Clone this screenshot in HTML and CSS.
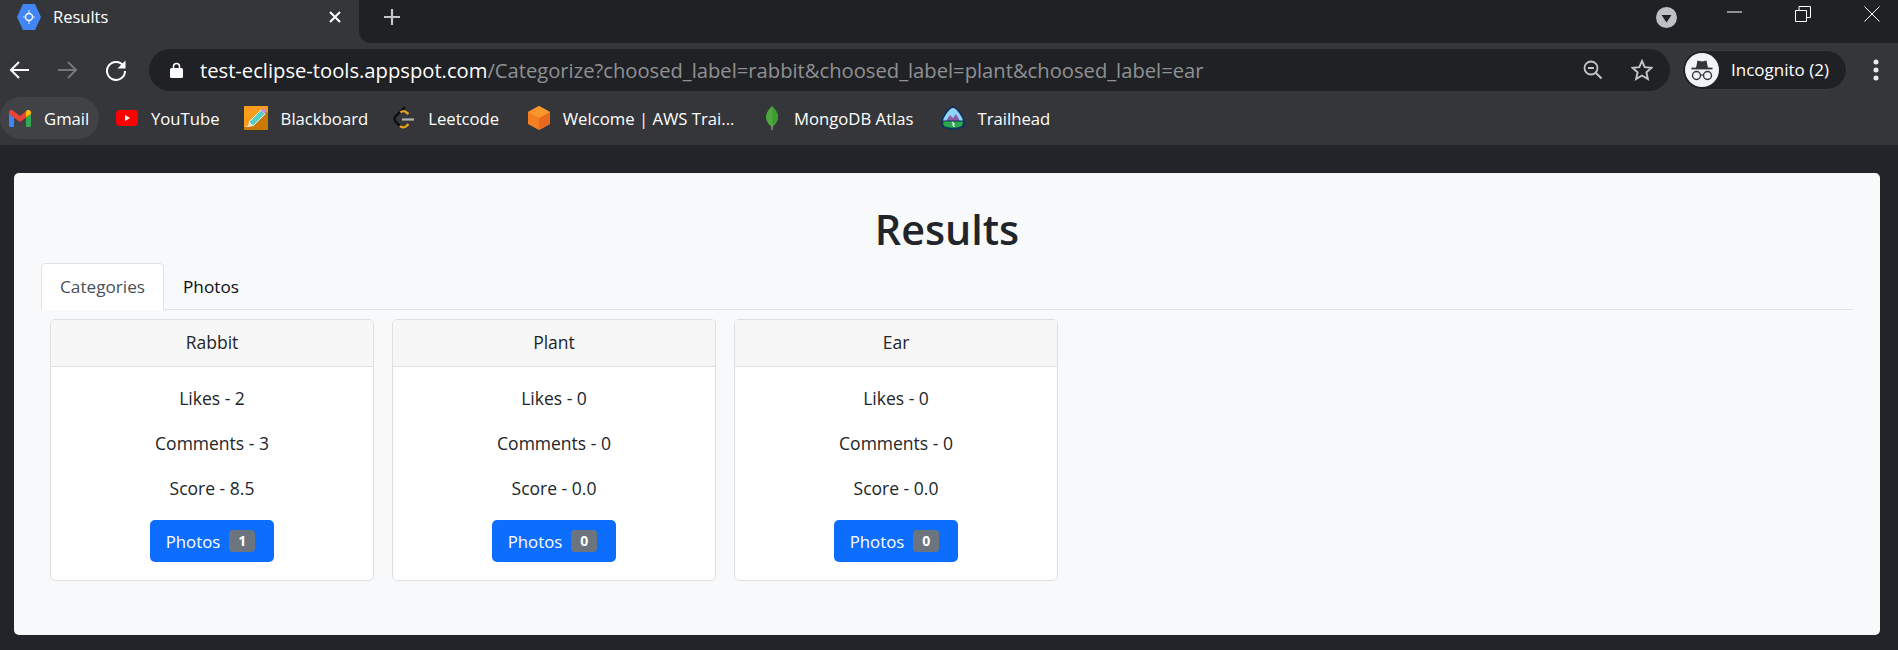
FILE: index.html
```html
<!DOCTYPE html>
<html lang="en">
<head>
  <meta charset="UTF-8">
  <title>Results</title>
  <link rel="stylesheet" href="styles.css">
</head>
<body>
  <div class="tabstrip">
    <div class="browser-tab">
      <svg class="favicon" width="24" height="28" viewBox="0 0 24 28">
        <path d="M6 1h12l6 13-6 13H6L0 14z" fill="#4285f4"/>
        <circle cx="12" cy="14" r="3.500" fill="none" stroke="#fff" stroke-width="1.400"/>
        <path d="M12 7v3M12 18v3M6 14h2.500M15.500 14H18" stroke="#cfe0fc" stroke-width="1.200"/>
      </svg>
      <span class="tab-title">Results</span>
      <svg class="tab-close" width="14" height="14" viewBox="0 0 14 14">
        <path d="M2 2l10 10M12 2L2 12" stroke="#fff" stroke-width="2"/>
      </svg>
    </div>
    <div class="tabstrip-rest">
      <svg class="new-tab" width="18" height="18" viewBox="0 0 18 18">
        <path d="M9 1v16M1 9h16" stroke="#c4c7c5" stroke-width="2.200"/>
      </svg>
      <div class="window-controls">
        <svg class="tab-search" width="21" height="21" viewBox="0 0 21 21">
          <circle cx="10.500" cy="10.500" r="10.500" fill="#bdc1c6"/>
          <path d="M5.500 8h10l-5 7.500z" fill="#202124"/>
        </svg>
        <svg class="win-min" width="15" height="2" viewBox="0 0 15 2">
          <path d="M0 1h15" stroke="#fff" stroke-width="1"/>
        </svg>
        <svg class="win-restore" width="16" height="16" viewBox="0 0 16 16">
          <path d="M.5 4.500h11v11H.5z" fill="none" stroke="#fff"/>
          <path d="M4 4.500V.5h11.500v11h-4" fill="none" stroke="#fff"/>
        </svg>
        <svg class="win-close" width="16" height="16" viewBox="0 0 16 16">
          <path d="M.5.5l15 15M15.500.5l-15 15" stroke="#fff"/>
        </svg>
      </div>
    </div>
  </div>

  <div class="toolbar">
    <svg class="nav-icon" width="22" height="20" viewBox="0 0 22 20">
      <path d="M21 10H3M11 2l-8 8 8 8" fill="none" stroke="#fff" stroke-width="2"/>
    </svg>
    <svg class="nav-icon nav-forward" width="22" height="20" viewBox="0 0 22 20">
      <path d="M1 10h18M11 2l8 8-8 8" fill="none" stroke="#75777a" stroke-width="2"/>
    </svg>
    <svg class="nav-icon nav-reload" width="22" height="22" viewBox="0 0 22 22">
      <path d="M18.500 7A9 9 0 1 0 20 12" fill="none" stroke="#fff" stroke-width="2"/>
      <path d="M20.500 1.500v8h-8z" fill="#fff"/>
    </svg>
    <div class="omnibox">
      <svg class="lock" width="13" height="16" viewBox="0 0 13 16">
        <path d="M3.500 6V4.500a3 3 0 0 1 6 0V6" fill="none" stroke="#fff" stroke-width="1.500"/>
        <rect y="6" width="13" height="10" rx="1.500" fill="#fff"/>
      </svg>
      <span class="url"><span class="url-host">test-eclipse-tools.appspot.com</span>/Categorize?choosed_label=rabbit&amp;choosed_label=plant&amp;choosed_label=ear</span>
      <svg class="zoom-out" width="21" height="21" viewBox="0 0 21 21">
        <circle cx="9" cy="9" r="6.500" fill="none" stroke="#c4c7c5" stroke-width="1.800"/>
        <path d="M6 9h6" stroke="#c4c7c5" stroke-width="2"/>
        <path d="M13.500 13.500l6 6" stroke="#c4c7c5" stroke-width="2"/>
      </svg>
      <svg class="star" width="22" height="22" viewBox="0 0 22 22">
        <path d="M11 2l2.700 6.200 6.800.6-5.100 4.500 1.500 6.700L11 16.500 5.100 20l1.500-6.700L1.500 8.800l6.800-.6z" fill="none" stroke="#c4c7c5" stroke-width="1.900"/>
      </svg>
    </div>
    <div class="profile">
      <svg class="avatar" width="34" height="34" viewBox="0 0 34 34">
        <circle cx="17" cy="17" r="17" fill="#f1f3f4"/>
        <path d="M11 15l1.500-7.500 4.500 1 4.500-1L23 15z" fill="#35363a"/>
        <path d="M6.500 15.500h21" stroke="#35363a" stroke-width="1.800"/>
        <circle cx="11.500" cy="22.500" r="4" fill="none" stroke="#35363a" stroke-width="1.400"/>
        <circle cx="22.500" cy="22.500" r="4" fill="none" stroke="#35363a" stroke-width="1.400"/>
        <path d="M15.500 22h3" stroke="#35363a" stroke-width="1.200"/>
      </svg>
      <span class="profile-name">Incognito (2)</span>
    </div>
    <svg class="menu-dots" width="6" height="22" viewBox="0 0 6 22">
      <circle cx="3" cy="3" r="2.500" fill="#e8eaed"/>
      <circle cx="3" cy="11" r="2.500" fill="#e8eaed"/>
      <circle cx="3" cy="19" r="2.500" fill="#e8eaed"/>
    </svg>
  </div>

  <div class="bookmarks">
    <a class="bookmark bookmark-hover">
      <svg width="22" height="17" viewBox="0 0 22 17">
        <path d="M0 4v11.500A1.500 1.500 0 0 0 1.500 17H5V7z" fill="#4285f4"/>
        <path d="M17 7v10h3.500a1.500 1.500 0 0 0 1.500-1.500V4z" fill="#34a853"/>
        <path d="M0 4l11 8 11-8V2.500C22 .5 19.500-.7 18 .5L11 6 4 .5C2.500-.7 0 .5 0 2.500z" fill="#ea4335"/>
        <path d="M17 7l5-3V2.500C22 .5 19.500-.7 18 .5L17 1.300z" fill="#fbbc04"/>
      </svg>
      <span>Gmail</span>
    </a>
    <a class="bookmark bookmark-youtube">
      <svg width="22" height="16" viewBox="0 0 22 16">
        <rect width="22" height="16" rx="4" fill="#f00"/>
        <path d="M9 5l5 3-5 3z" fill="#fff"/>
      </svg>
      <span>YouTube</span>
    </a>
    <a class="bookmark bookmark-blackboard">
      <svg width="24" height="24" viewBox="0 0 24 24">
        <rect width="24" height="24" fill="#fb9d1c"/>
        <path d="M0 24V21h4L21 4l3 3v17z" fill="#c97a06"/>
        <path d="M5 16L17 4l4 4L9 20z" fill="#56d0c6" stroke="#e8f7f5" stroke-width="1"/>
        <path d="M17 4l2.500-2 3 3L21 8z" fill="#c58bd8"/>
        <path d="M0 21h5l4-1-4-4-1 4z" fill="#f5e6c8"/>
      </svg>
      <span>Blackboard</span>
    </a>
    <a class="bookmark bookmark-wide">
      <svg width="22" height="24" viewBox="0 0 22 24">
        <path d="M12 1L2.500 10.500a3.500 3.500 0 0 0 0 5L7 20" fill="none" stroke="#0c0c0c" stroke-width="2.400"/>
        <path d="M7.500 6.500a4 4 0 0 1 6 0l2 1.500M7 20a4.500 4.500 0 0 0 6.500 0l2-2" fill="none" stroke="#e8a01c" stroke-width="2.400"/>
        <path d="M9 13.500h12" stroke="#b3b3b3" stroke-width="2.200"/>
      </svg>
      <span>Leetcode</span>
    </a>
    <a class="bookmark bookmark-wide">
      <svg width="22" height="24" viewBox="0 0 22 24">
        <path d="M11 0l11 6v12l-11 6L0 18V6z" fill="#f47f20"/>
        <path d="M11 12l11-6v12l-11 6z" fill="#e96a1f"/>
        <path d="M11 0l11 6-11 6L0 6z" fill="#f8962d"/>
      </svg>
      <span>Welcome | AWS Trai...</span>
    </a>
    <a class="bookmark bookmark-leaf">
      <svg width="12" height="24" viewBox="0 0 12 24">
        <path d="M6 0c3 3 6 7 6 11s-3 8-5.500 9.500h-1C3 19 0 15 0 11S3 3 6 0z" fill="#4ca83d"/>
        <path d="M6 0c3 3 6 7 6 11s-3 8-5.500 9.500z" fill="#3f9a35"/>
        <path d="M6 19v5" stroke="#a09c8e" stroke-width="1.200"/>
      </svg>
      <span>MongoDB Atlas</span>
    </a>
    <a class="bookmark">
      <svg width="24" height="24" viewBox="0 0 24 24">
        <path d="M12 1c4 1 7 5 10 11 2 5 1 8-1 9-5 2.500-13 2.500-18 0-2-1-3-4-1-9C5 6 8 2 12 1z" fill="#8fd3f7" stroke="#0b2f5b" stroke-width="1.600"/>
        <path d="M5 15l4-6 3 3 3-4 4 7z" fill="#8a5fa8"/>
        <path d="M2 15h20c.5 3 0 5-1.500 5.700-5 2-12 2-17 0C2 20 1.500 18 2 15z" fill="#2ba84a" stroke="#0b2f5b" stroke-width="1"/>
        <path d="M11 16l2 2-1 1 1.500 2" fill="none" stroke="#fff" stroke-width="1.200"/>
      </svg>
      <span>Trailhead</span>
    </a>
  </div>

  <main class="page-card">
    <h1 class="page-title">Results</h1>
    <ul class="nav-tabs">
      <li class="nav-link active">Categories</li>
      <li class="nav-link">Photos</li>
    </ul>
    <div class="category-row">
      <div class="card">
        <div class="card-header">Rabbit</div>
        <div class="card-body">
          <p>Likes - 2</p>
          <p>Comments - 3</p>
          <p>Score - 8.5</p>
          <a class="btn">Photos <span class="badge">1</span></a>
        </div>
      </div>
      <div class="card">
        <div class="card-header">Plant</div>
        <div class="card-body">
          <p>Likes - 0</p>
          <p>Comments - 0</p>
          <p>Score - 0.0</p>
          <a class="btn">Photos <span class="badge">0</span></a>
        </div>
      </div>
      <div class="card">
        <div class="card-header">Ear</div>
        <div class="card-body">
          <p>Likes - 0</p>
          <p>Comments - 0</p>
          <p>Score - 0.0</p>
          <a class="btn">Photos <span class="badge">0</span></a>
        </div>
      </div>
    </div>
  </main>
</body>
</html>
```

FILE: styles.css
```css
* {
  box-sizing: border-box;
}
body {
  margin: 0;
  height: 650px;
  overflow: hidden;
  background-color: #212529;
  font-family: "Open Sans", "Noto Sans", Arial, sans-serif;
  color: #212529;
}

/* browser chrome */
.tabstrip {
  display: flex;
  height: 43px;
  background-color: #35363a;
  color: #fff;
}
.browser-tab {
  display: flex;
  align-items: center;
  width: 359px;
  height: 43px;
  padding: 0 17px 10px 17px;
}
.tab-title {
  margin-left: 12px;
  font-size: 16.500px;
}
.tab-close {
  margin-left: auto;
}
.tabstrip-rest {
  flex: 1;
  display: flex;
  align-items: flex-start;
  background-color: #202124;
  border-bottom-left-radius: 12px;
}
.new-tab {
  margin: 8px 0 0 24px;
}
.window-controls {
  display: flex;
  align-items: flex-start;
  margin-left: auto;
}
.tab-search {
  margin: 7px 0 0 0;
}
.win-min {
  margin: 11px 0 0 50px;
}
.win-restore {
  margin: 6px 0 0 53px;
}
.win-close {
  margin: 6px 18px 0 53px;
}
.toolbar {
  display: flex;
  align-items: center;
  height: 54px;
  padding: 6px 0 7px 8px;
  background-color: #35363a;
}
.nav-forward {
  margin-left: 27px;
}
.nav-reload {
  margin-left: 26px;
}
.omnibox {
  display: flex;
  align-items: center;
  width: 1521px;
  height: 42px;
  margin-left: 22px;
  padding: 0 17px 0 21px;
  background-color: #202124;
  border-radius: 21px;
}
.url {
  margin-left: 17px;
  font-size: 20.200px;
  color: #8f9194;
  white-space: nowrap;
}
.url-host {
  color: #fff;
}
.zoom-out {
  margin-left: auto;
}
.star {
  margin-left: 28px;
}
.profile {
  display: flex;
  align-items: center;
  width: 165px;
  height: 40px;
  margin-left: 12px;
  padding-left: 2px;
  background-color: #202124;
  border: 1px solid #3c3d41;
  border-radius: 20px;
}
.profile-name {
  margin-left: 12px;
  font-size: 17px;
  color: #fff;
}
.menu-dots {
  margin-left: 26px;
}
.bookmarks {
  display: flex;
  align-items: center;
  height: 48px;
  padding-bottom: 6px;
  background-color: #35363a;
}
.bookmark {
  display: flex;
  align-items: center;
  gap: 13px;
  height: 42px;
  margin-right: 26px;
  color: #fff;
  font-size: 16.700px;
  white-space: nowrap;
}
.bookmark:first-child {
  margin-right: 17px;
}
.bookmark-hover {
  width: 99px;
  padding-left: 9px;
  background-color: #414246;
  border-radius: 21px;
}
.bookmark-youtube {
  margin-right: 24px;
}
.bookmark-blackboard {
  margin-right: 25px;
}
.bookmark-wide {
  margin-right: 28.500px;
}
.bookmark-leaf {
  margin-right: 27px;
}
.bookmark-leaf svg {
  margin: 0 3px;
}

/* page */
.page-card {
  height: 462px;
  margin: 28px 18px 0 14px;
  padding: 0 27px;
  background-color: #f8f9fa;
  border-radius: 5px;
}
.page-title {
  margin: 0;
  padding-top: 32px;
  height: 90px;
  font-size: 41.300px;
  font-weight: 600;
  line-height: 48px;
  text-align: center;
}
.nav-tabs {
  display: flex;
  height: 47px;
  margin: 0;
  padding: 0;
  list-style: none;
  border-bottom: 1px solid #dee2e6;
}
.nav-link {
  height: 47px;
  padding: 0 18px;
  border: 1px solid transparent;
  border-radius: 5px 5px 0 0;
  font-size: 17.200px;
  line-height: 46px;
  color: #0b0d12;
}
.nav-link.active {
  background-color: #fff;
  border-color: #dee2e6 #dee2e6 #fff;
  color: #495057;
}
.category-row {
  display: flex;
  gap: 18px;
  margin-top: 9px;
  padding-left: 9px;
}
.card {
  width: 324px;
  height: 262px;
  background-color: #fff;
  border: 1px solid #dfdfdf;
  border-radius: 5px;
  text-align: center;
  font-size: 17.500px;
}
.card-header {
  height: 47px;
  background-color: #f7f7f7;
  border-bottom: 1px solid #dfdfdf;
  border-radius: 4px 4px 0 0;
  line-height: 45px;
}
.card-body {
  padding: 18px;
}
.card-body p {
  margin: 0 0 18px 0;
  line-height: 26px;
  height: 27px;
}
.btn {
  display: inline-flex;
  align-items: center;
  justify-content: center;
  gap: 9px;
  width: 124px;
  height: 42px;
  padding-right: 3px;
  background-color: #0d6efd;
  border-radius: 5px;
  color: #fff;
  font-size: 16.800px;
}
.badge {
  width: 26px;
  height: 22px;
  background-color: #6c757d;
  border-radius: 4px;
  font-size: 14px;
  font-weight: 700;
  line-height: 22px;
}
```
